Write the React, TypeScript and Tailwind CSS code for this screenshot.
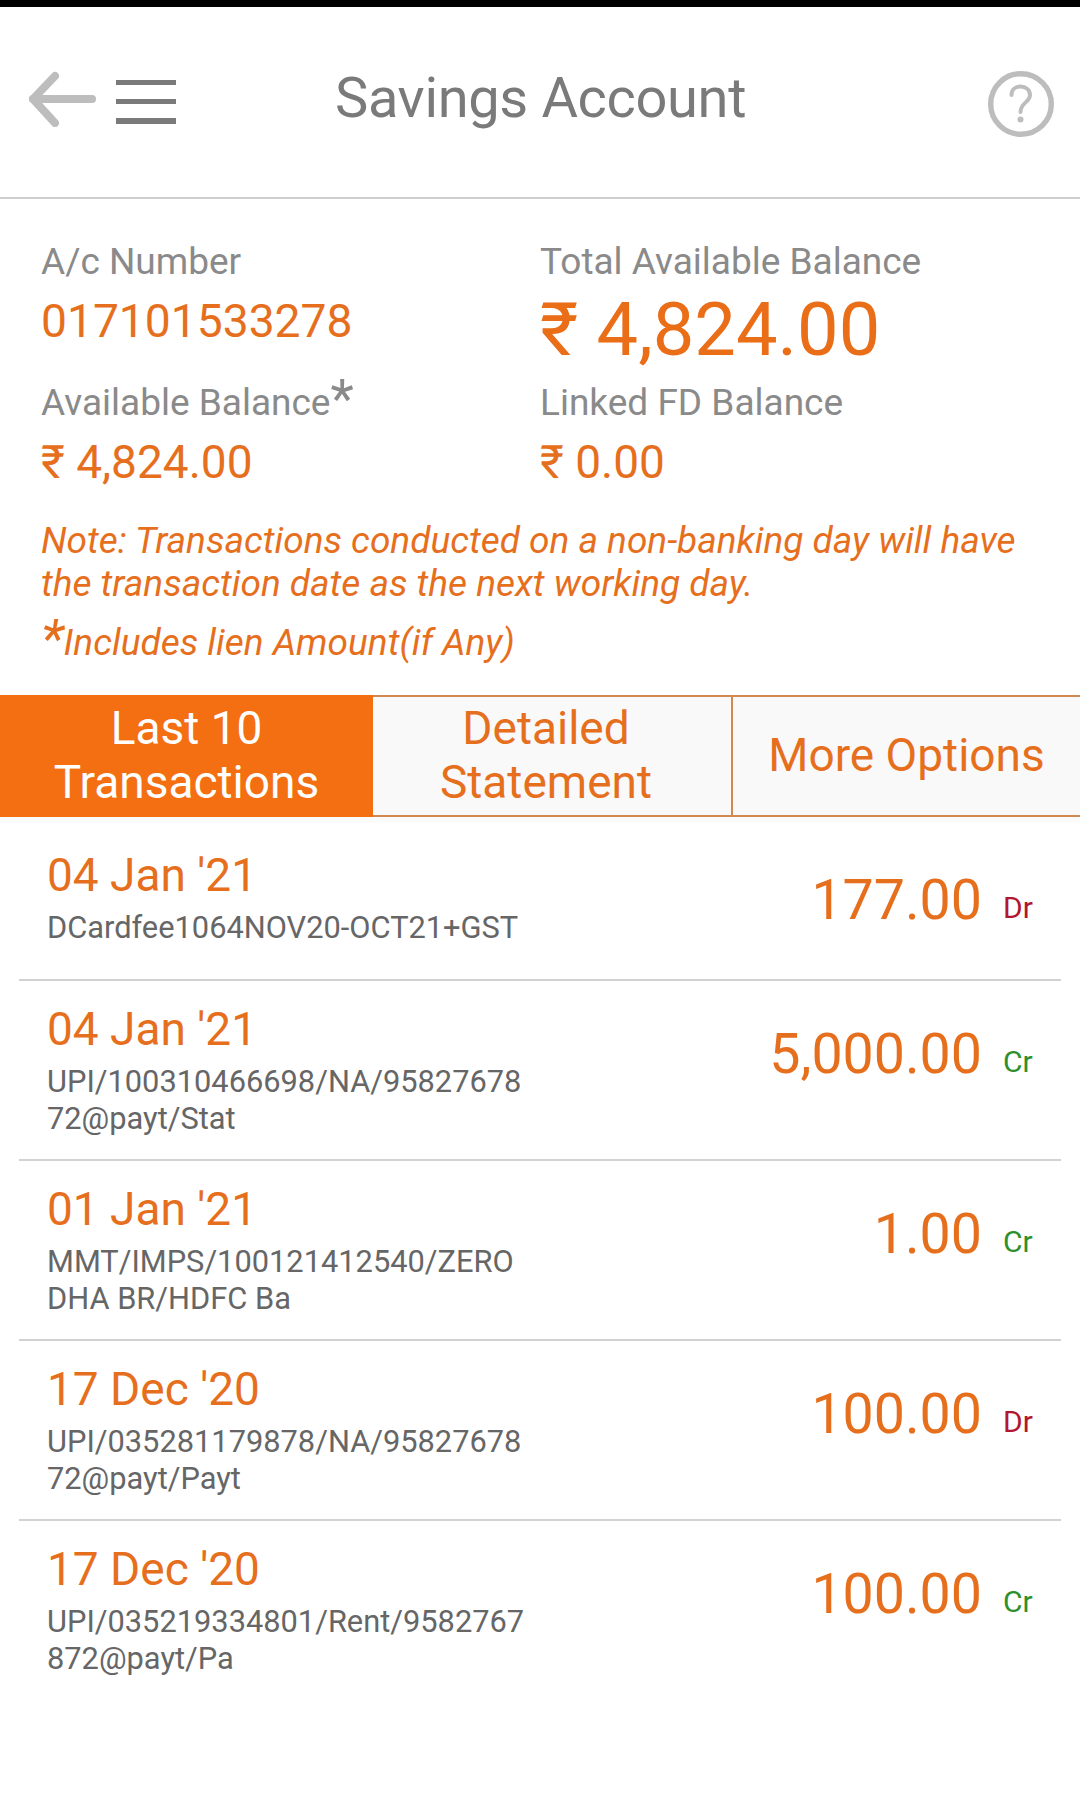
import React from 'react';

const rows = [
  { date: "04 Jan '21", desc: ['DCardfee1064NOV20-OCT21+GST'], amount: '177.00', type: 'Dr' },
  { date: "04 Jan '21", desc: ['UPI/100310466698/NA/95827678', '72@payt/Stat'], amount: '5,000.00', type: 'Cr' },
  { date: "01 Jan '21", desc: ['MMT/IMPS/100121412540/ZERO', 'DHA BR/HDFC Ba'], amount: '1.00', type: 'Cr' },
  { date: "17 Dec '20", desc: ['UPI/035281179878/NA/95827678', '72@payt/Payt'], amount: '100.00', type: 'Dr' },
  { date: "17 Dec '20", desc: ['UPI/035219334801/Rent/9582767', '872@payt/Pa'], amount: '100.00', type: 'Cr' },
];

export default function App() {
  return (
    <div className="w-[1080px] h-[1812px] bg-white overflow-hidden font-['Roboto',sans-serif]">
      <div className="h-[7px] bg-black" />

      {/* Header */}
      <div className="h-[192px] flex items-start border-b-2 border-[#cfcfcf]">
        <svg width="70" height="56" viewBox="0 0 70 56" className="ml-[28px] mt-[64px]" fill="none" stroke="#bdbdbd" strokeLinecap="round" strokeLinejoin="round" strokeWidth="8">
          <path d="M27 5 L5 28 L27 52" />
          <path d="M5 28 H64" />
        </svg>
        <div className="ml-[18px] mt-[73px] w-[60px] flex flex-col gap-[14px]">
          <div className="h-[5px] bg-[#7a7a7a]" />
          <div className="h-[5px] bg-[#7a7a7a]" />
          <div className="h-[6px] bg-[#7a7a7a]" />
        </div>
        <div className="ml-[159px] mt-[55px] text-[56px] leading-[72px] tracking-[-0.35px] text-[#7a7a7a]">Savings Account</div>
        <svg width="68" height="68" viewBox="0 0 68 68" className="ml-auto mr-[25px] mt-[63px]" fill="none">
          <circle cx="34" cy="34" r="30.3" stroke="#bdbdbd" strokeWidth="5.4" />
          <path d="M24.5 25 C24.5 19.5 28.5 16.5 33.5 16.5 C39 16.5 43 20 43 25 C43 32.5 33.5 32.5 33.5 42" stroke="#bdbdbd" strokeWidth="4" strokeLinecap="round" />
          <circle cx="33.5" cy="49.5" r="3" fill="#bdbdbd" />
        </svg>
      </div>

      {/* Summary */}
      <div className="h-[496px] pl-[41px] pr-[30px] pt-[40px]">
        <div className="grid grid-cols-[499px_1fr]">
          <div className="text-[37px] leading-[46px] text-[#8a8a8a]">A/c Number</div>
          <div className="text-[37px] leading-[46px] text-[#8a8a8a]">Total Available Balance</div>
          <div className="h-[95px] text-[46.2px] leading-[72px] text-[#e66f1e]">017101533278</div>
          <div className="h-[95px] text-[74px] leading-[90px] text-[#ea6d17]">₹ 4,824.00</div>
          <div className="h-[46px] text-[37px] leading-[46px] text-[#8a8a8a]">
            Available Balance<span className="relative top-[2px] text-[54px] leading-[30px]">*</span>
          </div>
          <div className="h-[46px] text-[37px] leading-[46px] text-[#8a8a8a]">Linked FD Balance</div>
          <div className="h-[74px] text-[46px] leading-[72px] text-[#e66f1e]">₹ 4,824.00</div>
          <div className="h-[74px] text-[46px] leading-[72px] text-[#e66f1e]">₹ 0.00</div>
        </div>
        <p className="mt-[19px] text-[37px] leading-[43px] italic text-[#e66f1e]">
          Note: Transactions conducted on a non-banking day will have the transaction date as the next working day.
        </p>
        <p className="mt-[13px] text-[37px] leading-[50px] italic text-[#e66f1e]">
          <span className="relative top-[2px] text-[54px] leading-[30px]">*</span>Includes lien Amount(if Any)
        </p>
      </div>

      {/* Tabs */}
      <div className="h-[122px] flex border-y-2 border-[#d08a50] bg-[#f9f9f9] text-[46px] leading-[54px] text-center">
        <div className="-my-[2px] w-[373px] pb-[2px] bg-[#f46e12] text-white flex items-center justify-center">
          <span>Last 10<br />Transactions</span>
        </div>
        <div className="w-[360px] border-r-2 border-[#d08a50] pr-[12px] pb-[2px] text-[#e66f1e] flex items-center justify-center">
          <span>Detailed<br />Statement</span>
        </div>
        <div className="flex-1 pb-[2px] text-[#e66f1e] flex items-center justify-center">More Options</div>
      </div>
      <div className="h-[6px] bg-[#fbfbfb]" />

      {/* Transactions */}
      <div className="px-[19px]">
        {rows.map((r, i) => (
          <div
            key={i}
            className={`flex items-start pl-[28px] ${i === 0 ? 'h-[158px] pt-[25px]' : 'h-[180px] pt-[21px]'} ${i < rows.length - 1 ? 'border-b-2 border-[#d2d2d2]' : ''}`}
          >
            <div className="flex-1">
              <div className="text-[46px] leading-[54px] text-[#e66f1e]">{r.date}</div>
              <div className="mt-[7px] text-[30.8px] leading-[37px] text-[#666666]">
                {r.desc.map((d) => (
                  <div key={d}>{d}</div>
                ))}
              </div>
            </div>
            <div className="mt-[17px] text-[55.5px] leading-[72px] text-[#e66f1e]">{r.amount}</div>
            <div className={`w-[54px] mt-[40px] mr-[25px] pl-[21px] text-[30px] leading-[40px] ${r.type === 'Dr' ? 'text-[#b3172f]' : 'text-[#2f8f2f]'}`}>
              {r.type}
            </div>
          </div>
        ))}
      </div>
    </div>
  );
}
